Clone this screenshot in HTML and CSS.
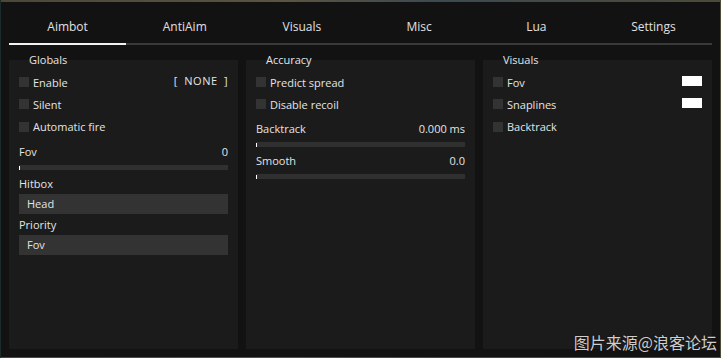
FILE: index.html
```html
<!DOCTYPE html>
<html lang="en">
<head>
  <meta charset="UTF-8" />
  <title>Menu</title>
  <link rel="stylesheet" href="styles.css">
</head>
<body>
  <!-- Main menu window -->
  <div class="window">
    <div class="tabs">
      <div class="tab active">Aimbot</div>
      <div class="tab">AntiAim</div>
      <div class="tab">Visuals</div>
      <div class="tab">Misc</div>
      <div class="tab">Lua</div>
      <div class="tab">Settings</div>
    </div>

    <div class="groups">
      <!-- Globals -->
      <div class="group">
        <div class="group-title">Globals</div>
        <div class="row"><span class="check"></span><span class="row-text">Enable</span><span class="bind">[ NONE ]</span></div>
        <div class="row"><span class="check"></span><span class="row-text">Silent</span></div>
        <div class="row"><span class="check"></span><span class="row-text">Automatic fire</span></div>
        <div class="slider">
          <div class="slider-head"><span>Fov</span><span>0</span></div>
          <div class="track"><span class="knob"></span></div>
        </div>
        <div class="combo-label">Hitbox</div>
        <div class="combo">Head</div>
        <div class="combo-label second">Priority</div>
        <div class="combo">Fov</div>
      </div>

      <!-- Accuracy -->
      <div class="group">
        <div class="group-title">Accuracy</div>
        <div class="row"><span class="check"></span><span class="row-text">Predict spread</span></div>
        <div class="row"><span class="check"></span><span class="row-text">Disable recoil</span></div>
        <div class="slider">
          <div class="slider-head"><span>Backtrack</span><span>0.000 ms</span></div>
          <div class="track"><span class="knob"></span></div>
        </div>
        <div class="slider">
          <div class="slider-head"><span>Smooth</span><span>0.0</span></div>
          <div class="track"><span class="knob"></span></div>
        </div>
      </div>

      <!-- Visuals -->
      <div class="group">
        <div class="group-title">Visuals</div>
        <div class="row"><span class="check"></span><span class="row-text">Fov</span><span class="swatch"></span></div>
        <div class="row"><span class="check"></span><span class="row-text">Snaplines</span><span class="swatch"></span></div>
        <div class="row"><span class="check"></span><span class="row-text">Backtrack</span></div>
      </div>
    </div>

    <div class="watermark">图片来源@浪客论坛</div>
  </div>
</body>
</html>
```

FILE: styles.css
```css
body {
  margin: 0;
  height: 358px;
  overflow: hidden;
  background: linear-gradient(90deg, #1d2a2c 0, #1d2a2c 1px, #4b4838 1px, #5a5440 40%, #3c4a50 60%, #4d4a3a 100%);
  font-family: "Open Sans", "Noto Sans", sans-serif;
  color: #e4e4e4;
}
.window {
  position: relative;
  margin: 2px 1px 0 1px;
  height: 355px;
  box-sizing: border-box;
  padding: 0 8px 8px;
  background: #121212;
}
.tabs {
  display: flex;
  height: 41px;
  border-bottom: 2px solid #3a3a3a;
}
.tab {
  flex: 1;
  display: flex;
  align-items: center;
  justify-content: center;
  font-size: 12px;
  color: #e0e0e0;
  padding-top: 7px;
  box-sizing: border-box;
}
.tab.active {
  border-bottom: 2px solid #f2f2f2;
  margin-bottom: -2px;
  height: 43px;
}
.groups {
  display: grid;
  grid-template-columns: repeat(3, 1fr);
  gap: 8px;
  margin-top: 15px;
  height: 289px;
}
.group {
  background: #1b1b1b;
  padding: 0 10px;
}
.group-title {
  font-size: 11px;
  line-height: 14px;
  height: 14px;
  margin: -7px 0 4px 10px;
  color: #e4e4e4;
}
.row {
  display: flex;
  align-items: center;
  height: 22px;
  font-size: 11px;
}
.row:nth-child(4) {
  height: 23px;
}
.check {
  width: 10px;
  height: 10px;
  background: #333333;
  margin-right: 4px;
}
.row-text {
  flex: 1;
}
.bind {
  font-size: 11px;
  margin-top: -4px;
  letter-spacing: 0.5px;
  word-spacing: 3px;
}
.swatch {
  width: 20px;
  height: 10px;
  background: #ffffff;
  margin-top: -2px;
}
.slider {
  margin-top: 7px;
}
.slider-head {
  display: flex;
  justify-content: space-between;
  font-size: 11px;
  line-height: 14px;
}
.track {
  margin-top: 6px;
  height: 5px;
  background: #303030;
  position: relative;
}
.knob {
  position: absolute;
  left: 0;
  top: 1px;
  width: 1px;
  height: 4px;
  background: #ffffff;
}
.combo-label {
  margin-top: 7px;
  font-size: 11px;
  line-height: 14px;
}
.combo-label.second {
  margin-top: 4px;
}
.combo {
  margin-top: 3px;
  height: 20px;
  line-height: 20px;
  background: #333333;
  font-size: 11px;
  padding-left: 8px;
}
.watermark {
  position: absolute;
  right: 3px;
  bottom: 3px;
  font-family: "Noto Sans CJK SC", sans-serif;
  font-size: 16px;
  color: #cfcfcf;
  text-shadow: 0 0 1px #000;
}
```
